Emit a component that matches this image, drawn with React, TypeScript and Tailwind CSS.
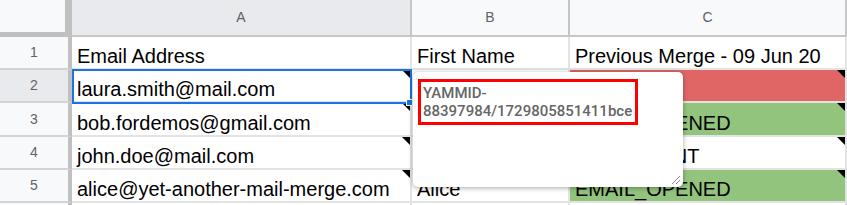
import React from "react";

const Tri = () => (
  <div className="absolute top-0 right-0 w-0 h-0 border-t-[8px] border-t-black border-l-[8px] border-l-transparent" />
);

type Row = { n: number; h: string; a: string; b: string; c: string; cBg: string; tri: boolean; sel?: boolean };

const rows: Row[] = [
  { n: 1, h: "h-[33px]", a: "Email Address", b: "First Name", c: "Previous Merge - 09 Jun 20", cBg: "bg-white", tri: false },
  { n: 2, h: "h-[33px]", a: "laura.smith@mail.com", b: "", c: "", cBg: "bg-[#e06666]", tri: true, sel: true },
  { n: 3, h: "h-[34px]", a: "bob.fordemos@gmail.com", b: "", c: "EMAIL_OPENED", cBg: "bg-[#93c47d]", tri: true },
  { n: 4, h: "h-[33px]", a: "john.doe@mail.com", b: "", c: "EMAIL_SENT", cBg: "bg-white", tri: true },
  { n: 5, h: "h-[33px]", a: "alice@yet-another-mail-merge.com", b: "Alice", c: "EMAIL_OPENED", cBg: "bg-[#93c47d]", tri: true },
  { n: 6, h: "h-[33px]", a: "", b: "", c: "", cBg: "bg-white", tri: false },
];

export default function App() {
  return (
    <div className="relative w-[847px] h-[205px] overflow-hidden bg-white font-['Liberation_Sans',Arial,sans-serif] text-black">
      {/* header row */}
      <div className="flex h-[37px]">
        <div className="w-[72px] h-[37px] shrink-0 bg-[#f8f9fa] border-r-[7px] border-b-[5px] border-[#c0c0c0]" />
        <div className="w-[340px] shrink-0 bg-[#e8eaed] border-r-2 border-b-2 border-[#c4c7c5] flex items-center justify-center text-[14px] text-[#5f6368]">
          A
        </div>
        <div className="w-[158px] shrink-0 bg-[#f8f9fa] border-r-2 border-b-2 border-[#c4c7c5] flex items-center justify-center text-[14px] text-[#5f6368]">
          B
        </div>
        <div className="w-[277px] shrink-0 bg-[#f8f9fa] border-r-2 border-b-2 border-[#c4c7c5] flex items-center justify-center text-[14px] text-[#5f6368]">
          C
        </div>
      </div>

      {rows.map((r) => (
        <div key={r.n} className={`flex ${r.h}`}>
          <div
            className={`w-[72px] shrink-0 border-r-4 border-r-[#c0c0c0] border-b-2 border-b-[#d3d3d3] flex items-center justify-center text-[14px] text-[#5f6368] ${
              r.sel ? "bg-[#e8eaed]" : "bg-[#f8f9fa]"
            }`}
          >
            {r.n <= 5 ? r.n : ""}
          </div>
          <div className="relative w-[340px] shrink-0 border-r-2 border-b-2 border-[#e2e3e3] flex items-end pl-[5px] text-[20px] leading-[23px] whitespace-nowrap overflow-hidden">
            {r.a}
            {r.tri && <Tri />}
          </div>
          <div className="relative w-[158px] shrink-0 border-r-2 border-b-2 border-[#e2e3e3] flex items-end pl-[5px] text-[20px] leading-[23px] whitespace-nowrap overflow-hidden">
            {r.b}
          </div>
          <div
            className={`relative w-[277px] shrink-0 border-r-2 border-b-2 border-[#e2e3e3] flex items-end pl-[5px] text-[20px] leading-[23px] whitespace-nowrap overflow-hidden ${r.cBg}`}
          >
            {r.c}
            {r.tri && <Tri />}
          </div>
        </div>
      ))}

      {/* selection */}
      <div className="absolute left-[72px] top-[69px] w-[340px] h-[35px] border-2 border-[#1a73e8] pointer-events-none" />
      <div className="absolute left-[406px] top-[99px] w-[7px] h-[7px] bg-[#1a73e8] border border-white" />

      {/* note popup */}
      <div className="absolute left-[413px] top-[72px] w-[270px] h-[115px] bg-white rounded-[5px] shadow-[0_1px_5px_rgba(0,0,0,0.35)] pl-[5px] pt-[7px] font-['Roboto','Liberation_Sans',sans-serif]">
        <div className="inline-block border-[3px] border-[#ff0000] pl-[2px] pr-[3px] pt-[2px] pb-[2px] text-[15px] leading-[18px] font-medium text-[#666666]">
          YAMMID-
          <br />
          88397984/1729805851411bce
        </div>
        <svg className="absolute right-[2px] bottom-[2px]" width="11" height="11" viewBox="0 0 11 11">
          <line x1="10" y1="2" x2="2" y2="10" stroke="#8a8a8a" strokeWidth="1" />
          <line x1="10" y1="6" x2="6" y2="10" stroke="#8a8a8a" strokeWidth="1" />
        </svg>
      </div>
    </div>
  );
}
